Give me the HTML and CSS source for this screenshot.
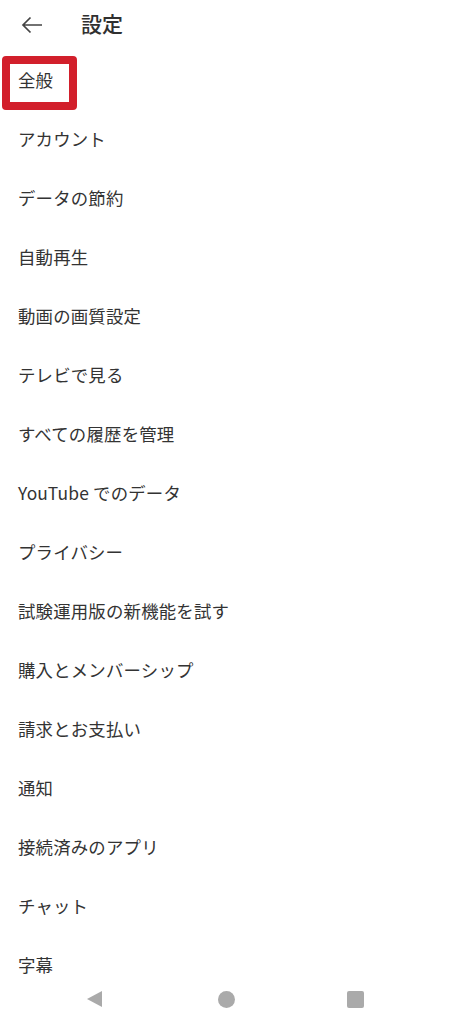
FILE: index.html
```html
<!DOCTYPE html>
<html lang="ja">
<head>
<meta charset="utf-8">
<title>設定</title>
<link rel="stylesheet" href="styles.css">
</head>
<body>
<header class="topbar">
  <svg class="back" width="22" height="18" viewBox="0 0 22 18" aria-hidden="true">
    <path d="M21 9H2M9.5 1.5L2 9l7.5 7.5" fill="none" stroke="#444" stroke-width="1.7"/>
  </svg>
  <h1 class="title">設定</h1>
</header>
<ul class="menu">
  <li class="item"><span class="hl">全般</span></li>
  <li class="item">アカウント</li>
  <li class="item">データの節約</li>
  <li class="item">自動再生</li>
  <li class="item">動画の画質設定</li>
  <li class="item">テレビで見る</li>
  <li class="item">すべての履歴を管理</li>
  <li class="item">YouTube でのデータ</li>
  <li class="item">プライバシー</li>
  <li class="item">試験運用版の新機能を試す</li>
  <li class="item">購入とメンバーシップ</li>
  <li class="item">請求とお支払い</li>
  <li class="item">通知</li>
  <li class="item">接続済みのアプリ</li>
  <li class="item">チャット</li>
  <li class="item">字幕</li>
</ul>
<nav class="navbar">
  <svg width="17" height="18" viewBox="0 0 17 18" aria-hidden="true"><path d="M16 1v16L1 9z" fill="#aaa"/></svg>
  <span class="dot"></span>
  <span class="sq"></span>
</nav>
</body>
</html>
```
FILE: styles.css
```css
html, body {
  margin: 0;
  padding: 0;
  background: #fff;
}
body {
  font-family: "Noto Sans CJK JP", Roboto, "Noto Sans", sans-serif;
  color: #333;
  width: 451px;
  height: 1024px;
  overflow: hidden;
}
.topbar {
  height: 50px;
  display: flex;
  align-items: center;
  padding-left: 21px;
}
.back {
  display: block;
}
.title {
  margin: 0 0 0 38px;
  padding-bottom: 4px;
  font-size: 21px;
  font-weight: 500;
  color: #303030;
  line-height: 1;
}
.menu {
  list-style: none;
  margin: 0;
  padding: 0;
}
.item {
  height: 59px;
  display: flex;
  align-items: center;
  padding-left: 18px;
  font-size: 17.4px;
  line-height: 1;
  color: #333;
  letter-spacing: 0.2px;
}
.hl {
  position: relative;
}
.hl::before {
  content: "";
  position: absolute;
  left: -16px;
  top: -15px;
  width: 59px;
  height: 38px;
  border: 8px solid #d21f2b;
  border-radius: 4px;
}
.navbar {
  position: fixed;
  left: 0;
  right: 0;
  bottom: 0;
  height: 50px;
  display: flex;
  align-items: center;
  justify-content: space-between;
  padding: 0 87px 0 86px;
}
.dot {
  width: 17px;
  height: 17px;
  border-radius: 50%;
  background: #aaa;
  margin-left: 2px;
}
.sq {
  width: 17px;
  height: 17px;
  border-radius: 2px;
  background: #aaa;
}
```
